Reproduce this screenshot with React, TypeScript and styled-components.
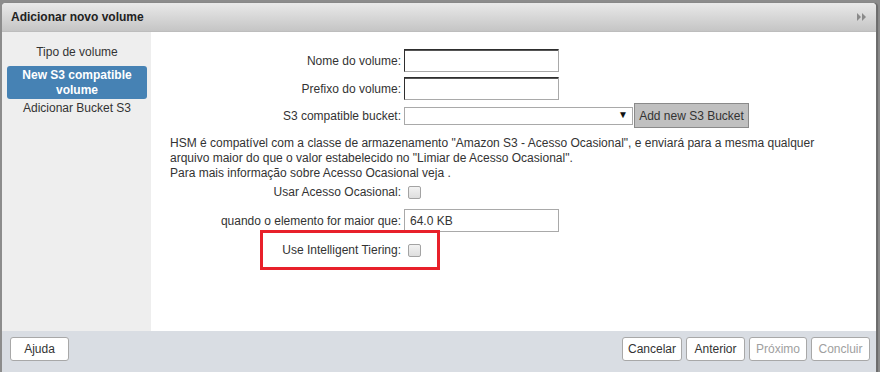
import React from "react";
import styled, { createGlobalStyle } from "styled-components";

const GlobalStyle = createGlobalStyle`
  html, body {
    margin: 0;
    padding: 0;
    height: 372px;
    overflow: hidden;
    background: #8c8c8c;
    font-family: "Liberation Sans", Arial, sans-serif;
    font-size: 12px;
    color: #333;
  }
`;

const Dialog = styled.div`
  margin: 3px 0 0 2px;
  width: 874px;
  height: 369px;
  background: #fff;
  border-radius: 4px 4px 0 0;
  box-shadow: 1px 0 0 #6e6e6e, 2px 0 1px rgba(0, 0, 0, 0.25);
  display: flex;
  flex-direction: column;
  overflow: hidden;
`;

const Header = styled.div`
  height: 29px;
  flex: none;
  display: flex;
  align-items: center;
  justify-content: space-between;
  padding: 0 10px 0 9px;
  background: linear-gradient(#e9e9e9, #c5c5c5);
  border-bottom: 1px solid #bdbdbd;
  box-sizing: border-box;
`;

const Title = styled.div`
  font-size: 12px;
  font-weight: 700;
  color: #222;
`;

const Body = styled.div`
  flex: 1;
  display: flex;
  min-height: 0;
`;

const Sidebar = styled.div`
  width: 149px;
  flex: none;
  background: #eeeeee;
  display: flex;
  flex-direction: column;
  padding: 13px 4px 0 5px;
  box-sizing: border-box;
`;

const NavItem = styled.div<{ $selected?: boolean; $gap?: number }>`
  margin-top: ${(p) => p.$gap ?? 0}px;
  text-align: center;
  line-height: 15px;
  border-radius: 3px;
  color: ${(p) => (p.$selected ? "#fff" : "#333")};
  background: ${(p) => (p.$selected ? "#4682b4" : "transparent")};
  font-weight: ${(p) => (p.$selected ? 700 : 400)};
  padding: ${(p) => (p.$selected ? "2px 4px 1px" : "0")};
`;

const Content = styled.div`
  flex: 1;
  position: relative;
  display: flex;
  flex-direction: column;
  padding-top: 17px;
`;

const Row = styled.div<{ $gap: number; $h: number }>`
  position: relative;
  margin-top: ${(p) => p.$gap}px;
  height: ${(p) => p.$h}px;
  display: flex;
  align-items: center;
`;

const Label = styled.label`
  width: 253px;
  flex: none;
  text-align: right;
  color: #333;
  padding-right: 3px;
  box-sizing: border-box;
`;

const TextInput = styled.input<{ $inset?: boolean }>`
  width: 155px;
  height: 23px;
  box-sizing: border-box;
  margin: 0;
  padding: 0 5px;
  font: inherit;
  color: #333;
  border: 1px solid #a9a9a9;
  ${(p) =>
    p.$inset &&
    `border-top-color: #2e2e2e; border-left-color: #2e2e2e; box-shadow: inset 0 1px 0 #555;`}
  outline: none;
`;

const SelectBox = styled.div`
  position: relative;
  width: 229px;
  height: 18px;
`;

const Select = styled.select`
  appearance: none;
  width: 100%;
  height: 100%;
  margin: 0;
  border: 1px solid #a9a9a9;
  background: #fff;
  font: inherit;
  border-radius: 0;
`;

const Arrow = styled.span`
  position: absolute;
  right: 5px;
  top: 2px;
  font-size: 10px;
  color: #111;
  pointer-events: none;
`;

const GrayButton = styled.button`
  height: 25px;
  width: 115px;
  margin: 0 0 0 1px;
  padding: 0;
  background: #c0c0c0;
  border: 1px solid #8a8a8a;
  font: inherit;
  color: #333;
`;

const Info = styled.p`
  margin: 8px 20px 0 19px;
  line-height: 15px;
  color: #333;
`;

const Check = styled.input`
  appearance: none;
  width: 13px;
  height: 13px;
  margin: 0 0 0 4px;
  border: 1px solid #a3a3a3;
  border-radius: 2px;
  background: linear-gradient(#f2f2f2, #dedede);
  box-sizing: border-box;
`;

const Highlight = styled.div`
  position: absolute;
  left: 109px;
  top: -11px;
  width: 180px;
  height: 40px;
  border: 3px solid #e8202a;
  box-sizing: border-box;
  pointer-events: none;
`;

const Footer = styled.div`
  height: 41px;
  flex: none;
  background: #d9dde3;
  display: flex;
  align-items: flex-start;
  justify-content: space-between;
  padding: 6px 6px 0 8px;
  box-sizing: border-box;
`;

const ButtonGroup = styled.div`
  display: flex;
  gap: 4px;
`;

const FooterButton = styled.button<{ $w: number }>`
  width: ${(p) => p.$w}px;
  height: 24px;
  padding: 0;
  background: #fff;
  border: 1px solid #a8a8a8;
  border-radius: 3px;
  font: inherit;
  color: #333;
  &:disabled {
    color: #a0a0a0;
  }
`;

const ExpandIcon = () => (
  <svg width="9" height="8" viewBox="0 0 9 8">
    <path d="M0 0 L4 4 L0 8 Z M5 0 L9 4 L5 8 Z" fill="#8a8a8a" />
  </svg>
);

export default function App() {
  return (
    <>
      <GlobalStyle />
      <Dialog>
        <Header>
          <Title>Adicionar novo volume</Title>
          <ExpandIcon />
        </Header>
        <Body>
          <Sidebar>
            <NavItem>Tipo de volume</NavItem>
            <NavItem $selected $gap={6}>
              New S3 compatible
              <br />
              volume
            </NavItem>
            <NavItem $gap={2}>Adicionar Bucket S3</NavItem>
          </Sidebar>
          <Content>
            <Row $gap={0} $h={23}>
              <Label>Nome do volume:</Label>
              <TextInput $inset />
            </Row>
            <Row $gap={5} $h={23}>
              <Label>Prefixo do volume:</Label>
              <TextInput $inset />
            </Row>
            <Row $gap={3} $h={25}>
              <Label>S3 compatible bucket:</Label>
              <SelectBox>
                <Select>
                  <option></option>
                </Select>
                <Arrow>▼</Arrow>
              </SelectBox>
              <GrayButton>Add new S3 Bucket</GrayButton>
            </Row>
            <Info>
              HSM é compatível com a classe de armazenamento "Amazon S3 - Acesso Ocasional", e enviará para a mesma qualquer
              <br />
              arquivo maior do que o valor estabelecido no "Limiar de Acesso Ocasional".
              <br />
              Para mais informação sobre Acesso Ocasional veja .
            </Info>
            <Row $gap={2} $h={18}>
              <Label>Usar Acesso Ocasional:</Label>
              <Check type="checkbox" />
            </Row>
            <Row $gap={8} $h={23}>
              <Label>quando o elemento for maior que:</Label>
              <TextInput defaultValue="64.0 KB" />
            </Row>
            <Row $gap={9} $h={18}>
              <Label>Use Intelligent Tiering:</Label>
              <Check type="checkbox" />
              <Highlight />
            </Row>
          </Content>
        </Body>
        <Footer>
          <FooterButton $w={59}>Ajuda</FooterButton>
          <ButtonGroup>
            <FooterButton $w={60}>Cancelar</FooterButton>
            <FooterButton $w={59}>Anterior</FooterButton>
            <FooterButton $w={58} disabled>
              Próximo
            </FooterButton>
            <FooterButton $w={59} disabled>
              Concluir
            </FooterButton>
          </ButtonGroup>
        </Footer>
      </Dialog>
    </>
  );
}
